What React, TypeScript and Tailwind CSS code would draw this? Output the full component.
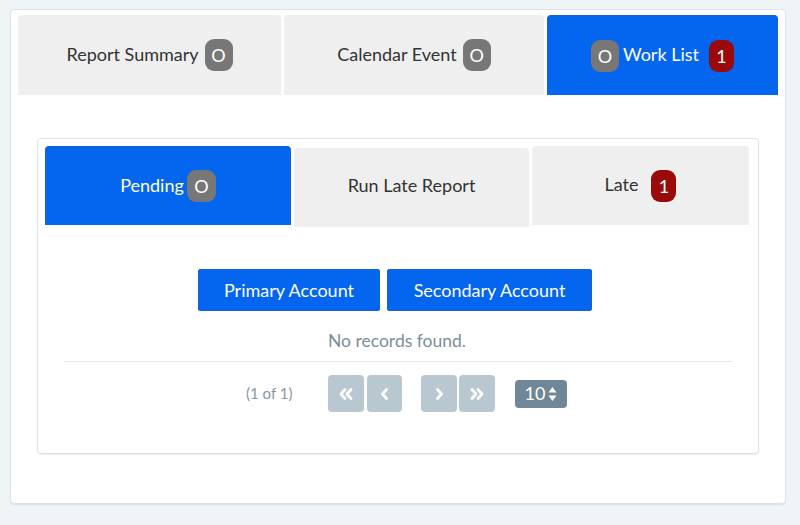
import React from "react";

const font = { fontFamily: "Lato, 'Noto Sans', sans-serif" };

function Badge({ children, red, cls = "" }: { children: React.ReactNode; red?: boolean; cls?: string }) {
  return (
    <span
      className={
        "inline-flex items-center justify-center rounded-[9px] text-white text-[18px] leading-none h-[32px] " +
        (red ? "bg-[#9b0a0a] w-[25px]" : "bg-[#777777] w-[28px]") +
        " " +
        cls
      }
    >
      {children}
    </span>
  );
}

function Chevron({ dir, double }: { dir: "l" | "r"; double?: boolean }) {
  const single = dir === "l" ? "M10.5 4.5 L6.5 9 L10.5 13.5" : "M7.5 4.5 L11.5 9 L7.5 13.5";
  return (
    <svg width="18" height="18" viewBox="0 0 18 18" fill="none" stroke="white" strokeWidth="2.8" strokeLinecap="round" strokeLinejoin="round">
      {double ? (
        dir === "l" ? (
          <>
            <path d="M8 4.5 L4 9 L8 13.5" />
            <path d="M14 4.5 L10 9 L14 13.5" />
          </>
        ) : (
          <>
            <path d="M4 4.5 L8 9 L4 13.5" />
            <path d="M10 4.5 L14 9 L10 13.5" />
          </>
        )
      ) : (
        <path d={single} />
      )}
    </svg>
  );
}

export default function App() {
  return (
    <div className="w-[800px] h-[525px] bg-[#eff4f7] pt-[9px] pl-[10px]" style={font}>
      <div className="w-[776px] h-[495px] bg-white border border-[#dbe3e8] rounded-[4px] shadow-[0_1px_1px_rgba(0,0,0,0.08)] pt-[5px] px-[7px]">
        {/* top tabs */}
        <div className="flex gap-[3px]">
          <div className="w-[263px] h-[80px] bg-[#efefef] rounded-t-[4px] flex items-center justify-center gap-[6px] text-[18px] text-[#333]">
            <span className="-mt-[2px]">Report Summary</span>
            <Badge>O</Badge>
          </div>
          <div className="w-[260px] h-[80px] bg-[#efefef] rounded-t-[4px] flex items-center justify-center gap-[6px] text-[18px] text-[#333]">
            <span className="-mt-[2px]">Calendar Event</span>
            <Badge>O</Badge>
          </div>
          <div className="w-[231px] h-[80px] bg-[#0466ee] border border-[#1a5fd6] border-b-0 rounded-t-[4px] flex items-center justify-center text-[18px] text-white">
            <Badge>O</Badge>
            <span className="ml-[4px] -mt-[2px]">Work List</span>
            <Badge red cls="ml-[10px]">1</Badge>
          </div>
        </div>

        {/* inner card */}
        <div className="mt-[43px] mx-[19px] h-[316px] border border-[#dbe3e8] rounded-[4px] shadow-[0_1px_1px_rgba(0,0,0,0.08)] pt-[7px] px-[7px]">
          <div className="flex items-start gap-[3px] h-[79px]">
            <div className="w-[246px] h-[79px] bg-[#0466ee] border border-[#1a5fd6] border-b-0 rounded-t-[4px] flex items-center justify-center gap-[3px] text-[18px] text-white">
              <span className="-mt-[2px]">Pending</span>
              <Badge cls="w-[29px]">O</Badge>
            </div>
            <div className="mt-[2px] w-[235px] h-[79px] bg-[#efefef] rounded-t-[4px] flex items-center justify-center text-[18px] text-[#333]">
              <span className="-mt-[4px]">Run Late Report</span>
            </div>
            <div className="w-[217px] h-[79px] bg-[#efefef] rounded-t-[4px] flex items-center justify-center text-[18px] text-[#333]">
              <span className="-mt-[2px]">Late</span>
              <Badge red cls="ml-[13px]">1</Badge>
            </div>
          </div>

          <div className="mt-[44px] flex justify-center gap-[7px] pr-[6px]">
            <button className="w-[182px] h-[42px] bg-[#0466ee] border border-[#1a5fd6] rounded-[2px] text-white text-[18px]">
              Primary Account
            </button>
            <button className="w-[205px] h-[42px] bg-[#0466ee] border border-[#1a5fd6] rounded-[2px] text-white text-[18px]">
              Secondary Account
            </button>
          </div>

          <div className="mt-[18px] text-center text-[17.5px] leading-[24px] text-[#7b8d99] pr-[2px]">No records found.</div>

          <div className="mt-[8px] mx-[19px] border-t border-[#e0e6ea]" />

          <div className="mt-[13px] flex items-center pl-[201px]">
            <span className="text-[15px] text-[#8796a1] w-[47px] whitespace-nowrap">(1 of 1)</span>
            <div className="ml-[35px] flex gap-[3px]">
              <div className="w-[36px] h-[37px] bg-[#b9c7d0] rounded-[4px] flex items-center justify-center">
                <Chevron dir="l" double />
              </div>
              <div className="w-[35px] h-[37px] bg-[#b9c7d0] rounded-[4px] flex items-center justify-center">
                <Chevron dir="l" />
              </div>
            </div>
            <div className="ml-[19px] flex gap-[2px]">
              <div className="w-[36px] h-[37px] bg-[#b9c7d0] rounded-[4px] flex items-center justify-center">
                <Chevron dir="r" />
              </div>
              <div className="w-[36px] h-[37px] bg-[#b9c7d0] rounded-[4px] flex items-center justify-center">
                <Chevron dir="r" double />
              </div>
            </div>
            <div className="ml-[20px] w-[52px] h-[28px] bg-[#6f8796] rounded-[4px] flex items-center justify-center gap-[3px] text-white text-[18px]">
              <span>10</span>
              <svg width="9" height="16" viewBox="0 0 9 16" fill="white">
                <path d="M4.5 1 L8.5 6.5 L0.5 6.5 Z" />
                <path d="M4.5 15 L8.5 9.5 L0.5 9.5 Z" />
              </svg>
            </div>
          </div>
        </div>
      </div>
    </div>
  );
}
